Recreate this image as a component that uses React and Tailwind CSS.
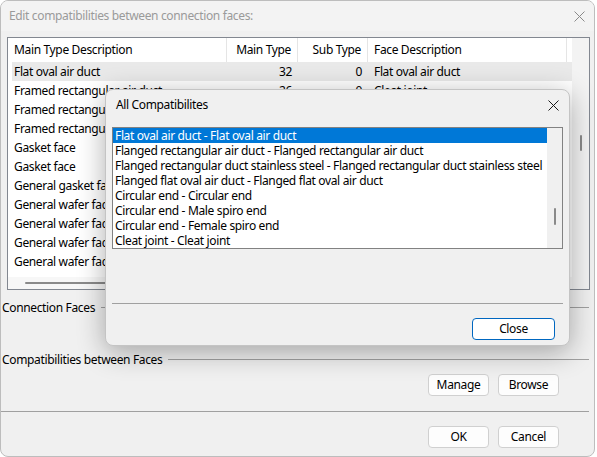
import React from "react";

const font = { fontFamily: '"Noto Sans", "Segoe UI", sans-serif' };

const rows = [
  ["Flat oval air duct", 32, 0, "Flat oval air duct"],
  ["Framed rectangular air duct", 26, 0, "Cleat joint"],
  ["Framed rectangular air duct", 26, 0, "Framed rectangular air duct"],
  ["Framed rectangular air duct", 26, 0, "Slip joint"],
  ["Gasket face", 40, 0, "Gasket face"],
  ["Gasket face", 40, 1, "General gasket face"],
  ["General gasket face", 41, 0, "Gasket face"],
  ["General wafer face", 42, 0, "General wafer face"],
  ["General wafer face", 42, 1, "Wafer face"],
  ["General wafer face", 42, 2, "Lug face"],
  ["General wafer face", 42, 3, "Flange face"],
];

const items = [
  "Flat oval air duct - Flat oval air duct",
  "Flanged rectangular air duct - Flanged rectangular air duct",
  "Flanged rectangular duct stainless steel - Flanged rectangular duct stainless steel",
  "Flanged flat oval air duct - Flanged flat oval air duct",
  "Circular end - Circular end",
  "Circular end - Male spiro end",
  "Circular end - Female spiro end",
  "Cleat joint - Cleat joint",
];

function CloseX({ color = "#8a8a8a" }) {
  return (
    <svg width="11" height="11" viewBox="0 0 11 11">
      <path d="M0.5 0.5 L10.5 10.5 M10.5 0.5 L0.5 10.5" stroke={color} strokeWidth="1" fill="none" />
    </svg>
  );
}

function Btn({ children, primary }) {
  return (
    <button
      className={`h-[22px] rounded-[4px] text-[12px] text-black flex items-center justify-center ${
        primary ? "w-[83px] border border-[#0067c0] bg-white" : "w-[61px] border border-[#d0d0d0] bg-[#fdfdfd]"
      }`}
    >
      {children}
    </button>
  );
}

export default function App() {
  return (
    <div className="w-[597px] h-[457px] bg-white tracking-[-0.35px]" style={font}>
      <div className="relative w-[595px] h-[457px] bg-[#f0f0f0] border border-[#bdbdbd] rounded-[8px] overflow-hidden">
        {/* title bar */}
        <div className="h-[30px] flex items-center justify-between pl-[8px] pr-[9px] bg-[#f3f3f3]">
          <span className="text-[12px] text-[#9a9a9a]">Edit compatibilities between connection faces:</span>
          <CloseX />
        </div>

        {/* table */}
        <div className="ml-[6px] mt-[6px] w-[583px] h-[253px] border border-[#828790] bg-white flex">
          <div className="w-[564px] flex flex-col">
            <div className="h-[24px] flex text-[12px] text-black">
              <div className="w-[219px] pl-[6px] flex items-center border-r border-[#e5e5e5]">Main Type Description</div>
              <div className="w-[71px] pr-[6px] flex items-center justify-end border-r border-[#e5e5e5]">Main Type</div>
              <div className="w-[70px] pr-[6px] flex items-center justify-end border-r border-[#e5e5e5]">Sub Type</div>
              <div className="w-[199px] pl-[6px] flex items-center border-r border-[#e5e5e5]">Face Description</div>
            </div>
            <div className="flex-1 flex flex-col">
              {rows.map((r, i) => (
                <div
                  key={i}
                  className={`ml-[4px] h-[19px] flex items-center text-[12px] text-black whitespace-nowrap ${
                    i === 0 ? "bg-[#e9e9e9]" : ""
                  }`}
                >
                  <div className="w-[215px] pl-[2px] overflow-hidden">{r[0]}</div>
                  <div className="w-[71px] pr-[6px] text-right">{r[1]}</div>
                  <div className="w-[70px] pr-[6px] text-right">{r[2]}</div>
                  <div className="w-[200px] pl-[6px] overflow-hidden">{r[3]}</div>
                </div>
              ))}
            </div>
            <div className="h-[12px] bg-[#f7f7f7] flex items-center pl-[17px]">
              <div className="w-[530px] h-[2px] rounded-full bg-[#8a8a8a]" />
            </div>
          </div>
          <div className="flex-1 bg-[#f3f3f3] pt-[97px] flex justify-center">
            <div className="w-[2px] h-[16px] rounded-full bg-[#8a8a8a]" />
          </div>
        </div>

        {/* groups */}
        <div className="mt-[9px] h-[17px] flex items-center text-[12px] text-black">
          <span className="pl-[1px]">Connection Faces</span>
          <div className="ml-[6px] flex-1 mr-[5px] h-px bg-[#a0a0a0]" />
        </div>
        <div className="mt-[35px] h-[17px] flex items-center text-[12px] text-black">
          <span className="pl-[1px]">Compatibilities between Faces</span>
          <div className="ml-[6px] flex-1 mr-[5px] h-px bg-[#a0a0a0]" />
        </div>
        <div className="mt-[6px] flex justify-end gap-[9px] pr-[35px]">
          <Btn>Manage</Btn>
          <Btn>Browse</Btn>
        </div>
        <div className="mt-[15px] mr-[5px] h-px bg-[#a0a0a0]" />
        <div className="mt-[14px] flex justify-end gap-[9px] pr-[35px]">
          <Btn>OK</Btn>
          <Btn>Cancel</Btn>
        </div>

        {/* modal dialog */}
        <div className="absolute left-[104px] top-[88px] w-[465px] h-[257px] bg-[#f0f0f0] border border-[#c4c4c4] rounded-[8px] shadow-[0_6px_28px_rgba(0,0,0,0.32)] flex flex-col">
          <div className="h-[30px] flex items-center justify-between pl-[10px] pr-[10px]">
            <span className="text-[12px] text-black">All Compatibilites</span>
            <CloseX color="#1a1a1a" />
          </div>
          <div className="ml-[6px] mt-[7px] w-[451px] h-[122px] border border-[#828282] bg-white flex">
            <div className="w-[434px] flex flex-col">
              {items.map((t, i) => (
                <div
                  key={i}
                  className={`h-[15px] leading-[15px] pl-[2px] text-[12px] whitespace-nowrap overflow-hidden ${
                    i === 0 ? "bg-[#0078d7] text-white" : "text-black"
                  }`}
                >
                  {t}
                </div>
              ))}
            </div>
            <div className="flex-1 bg-[#f0f0f0] pt-[80px] flex justify-center">
              <div className="w-[2px] h-[17px] rounded-full bg-[#8a8a8a]" />
            </div>
          </div>
          <div className="ml-[6px] mt-[54px] w-[451px] h-px bg-[#a0a0a0]" />
          <div className="mt-[14px] flex justify-end pr-[14px]">
            <Btn primary>Close</Btn>
          </div>
        </div>
      </div>
    </div>
  );
}
